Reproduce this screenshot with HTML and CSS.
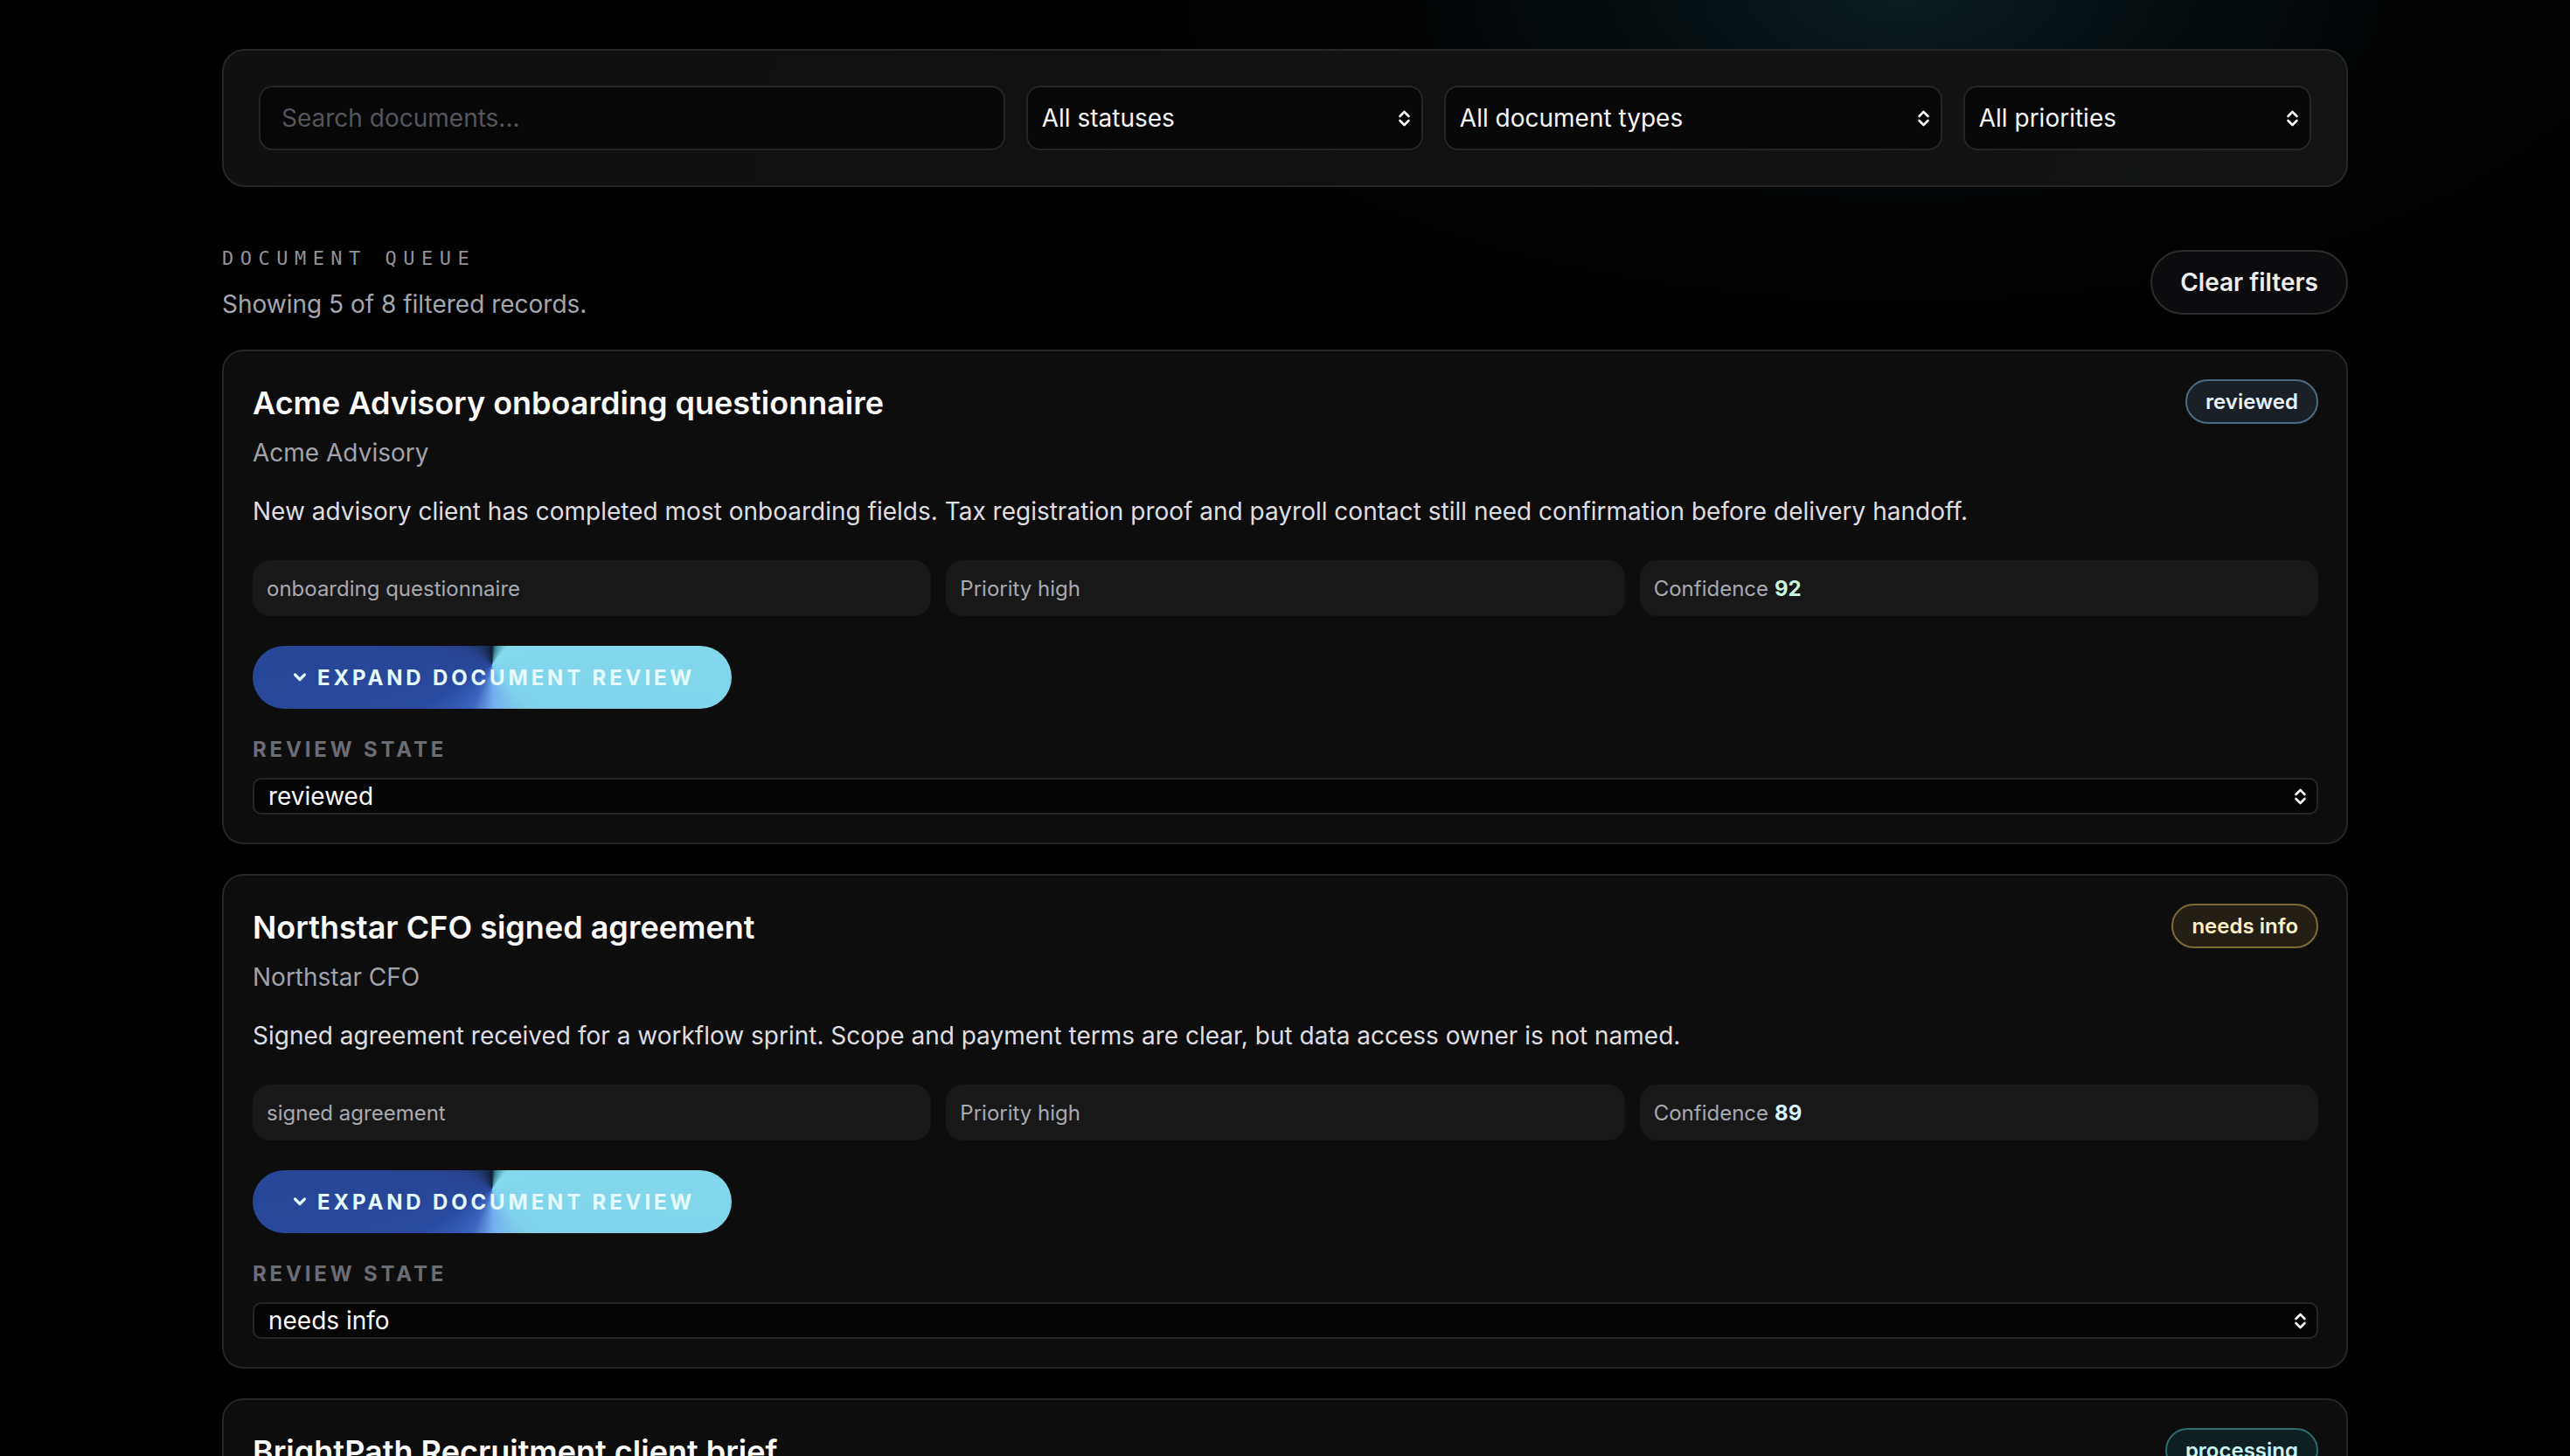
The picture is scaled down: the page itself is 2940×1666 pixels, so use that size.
FILE: index.html
```html
<!DOCTYPE html>
<html lang="en">
<head>
<meta charset="utf-8">
<title>Document queue</title>
<link rel="stylesheet" href="styles.css">
</head>
<body>
<main class="page">
  <section class="filters">
    <input class="search" type="text" placeholder="Search documents...">
    <div class="select-wrap">
      <select class="select"><option>All statuses</option></select>
      <svg class="updown" viewBox="0 0 15 21"><path d="M2.5 8 L7.5 3 L12.5 8 M2.5 13 L7.5 18 L12.5 13"/></svg>
    </div>
    <div class="select-wrap">
      <select class="select"><option>All document types</option></select>
      <svg class="updown" viewBox="0 0 15 21"><path d="M2.5 8 L7.5 3 L12.5 8 M2.5 13 L7.5 18 L12.5 13"/></svg>
    </div>
    <div class="select-wrap">
      <select class="select"><option>All priorities</option></select>
      <svg class="updown" viewBox="0 0 15 21"><path d="M2.5 8 L7.5 3 L12.5 8 M2.5 13 L7.5 18 L12.5 13"/></svg>
    </div>
  </section>

  <header class="queue-head">
    <div class="queue-titles">
      <div class="eyebrow">DOCUMENT QUEUE</div>
      <p class="count">Showing 5 of 8 filtered records.</p>
    </div>
    <button class="clear">Clear filters</button>
  </header>

  <div class="list">
    <article class="card">
      <div class="card-head">
        <div>
          <h2 class="title">Acme Advisory onboarding questionnaire</h2>
          <p class="client">Acme Advisory</p>
        </div>
        <span class="badge badge-reviewed">reviewed</span>
      </div>
      <p class="desc">New advisory client has completed most onboarding fields. Tax registration proof and payroll contact still need confirmation before delivery handoff.</p>
      <div class="chips">
        <span class="chip">onboarding questionnaire</span>
        <span class="chip">Priority high</span>
        <span class="chip">Confidence <b class="conf conf-high">92</b></span>
      </div>
      <button class="expand"><svg class="chev" viewBox="0 0 16 12"><path d="M2.5 3 L8 8.5 L13.5 3"/></svg>EXPAND DOCUMENT REVIEW</button>
      <div class="state-label">REVIEW STATE</div>
      <div class="select-wrap">
        <select class="state-select"><option>reviewed</option></select>
        <svg class="updown" viewBox="0 0 15 21"><path d="M2.5 8 L7.5 3 L12.5 8 M2.5 13 L7.5 18 L12.5 13"/></svg>
      </div>
    </article>

    <article class="card">
      <div class="card-head">
        <div>
          <h2 class="title">Northstar CFO signed agreement</h2>
          <p class="client">Northstar CFO</p>
        </div>
        <span class="badge badge-needs">needs info</span>
      </div>
      <p class="desc">Signed agreement received for a workflow sprint. Scope and payment terms are clear, but data access owner is not named.</p>
      <div class="chips">
        <span class="chip">signed agreement</span>
        <span class="chip">Priority high</span>
        <span class="chip">Confidence <b class="conf">89</b></span>
      </div>
      <button class="expand"><svg class="chev" viewBox="0 0 16 12"><path d="M2.5 3 L8 8.5 L13.5 3"/></svg>EXPAND DOCUMENT REVIEW</button>
      <div class="state-label">REVIEW STATE</div>
      <div class="select-wrap">
        <select class="state-select"><option>needs info</option></select>
        <svg class="updown" viewBox="0 0 15 21"><path d="M2.5 8 L7.5 3 L12.5 8 M2.5 13 L7.5 18 L12.5 13"/></svg>
      </div>
    </article>

    <article class="card">
      <div class="card-head">
        <div>
          <h2 class="title">BrightPath Recruitment client brief</h2>
          <p class="client">BrightPath Recruitment</p>
        </div>
        <span class="badge badge-processing">processing</span>
      </div>
      <p class="desc">Client brief received for recruitment workflow review. Extraction is still running on the attached role descriptions.</p>
      <div class="chips">
        <span class="chip">client brief</span>
        <span class="chip">Priority medium</span>
        <span class="chip">Confidence <b class="conf">74</b></span>
      </div>
      <button class="expand"><svg class="chev" viewBox="0 0 16 12"><path d="M2.5 3 L8 8.5 L13.5 3"/></svg>EXPAND DOCUMENT REVIEW</button>
      <div class="state-label">REVIEW STATE</div>
      <div class="select-wrap">
        <select class="state-select"><option>processing</option></select>
        <svg class="updown" viewBox="0 0 15 21"><path d="M2.5 8 L7.5 3 L12.5 8 M2.5 13 L7.5 18 L12.5 13"/></svg>
      </div>
    </article>
  </div>
</main>
</body>
</html>
```
FILE: styles.css
```css
* { box-sizing: border-box; }

html, body {
  margin: 0;
  background: #000;
}

body {
  min-height: 1666px;
  font-family: Inter, "Noto Sans", "Liberation Sans", sans-serif;
  color: #f2f2f2;
  background:
    radial-gradient(ellipse 1000px 420px at 74% 0%, rgba(28, 64, 72, 0.42), rgba(10, 24, 28, 0.15) 55%, transparent 100%),
    #000;
}

.page {
  width: 2432px;
  margin: 0 auto;
  padding-top: 56px;
}

/* Filters panel */
.filters {
  display: grid;
  grid-template-columns: 1.88fr 1fr 1.255fr 0.877fr;
  gap: 24px;
  padding: 40px;
  background: linear-gradient(100deg, #101010 0%, #111111 60%, #121314 100%);
  border: 2px solid #262626;
  border-radius: 26px;
}

.search {
  height: 74px;
  padding: 0 24px;
  font: 400 28px Inter, "Noto Sans", sans-serif;
  color: #eee;
  background: #070707;
  border: 2px solid #252525;
  border-radius: 16px;
  outline: none;
}
.search::placeholder { color: #55555c; }

.select-wrap {
  position: relative;
}

.select {
  width: 100%;
  height: 74px;
  padding: 0 40px 0 16px;
  font: 400 28px Inter, "Noto Sans", sans-serif;
  color: #f6f6f6;
  background: #070707;
  border: 2px solid #252525;
  border-radius: 16px;
  appearance: none;
  -webkit-appearance: none;
  outline: none;
}

.updown {
  position: absolute;
  right: 14px;
  top: 50%;
  width: 15px;
  height: 21px;
  margin-top: -10px;
  pointer-events: none;
  fill: none;
  stroke: #f4f4f4;
  stroke-width: 2.6;
  stroke-linecap: round;
  stroke-linejoin: round;
}

/* Queue header */
.queue-head {
  display: flex;
  justify-content: space-between;
  align-items: flex-start;
  margin: 69px 0 32px;
}

.queue-titles {
  margin-top: 2px;
}

.eyebrow {
  font: 400 22px "DejaVu Sans Mono", "Liberation Mono", monospace;
  line-height: 22px;
  letter-spacing: 0.34em;
  color: #92929a;
}

.count {
  margin: 21px 0 0;
  font-size: 28px;
  line-height: 40px;
  color: #a6a6ae;
}

.clear {
  height: 74px;
  margin-top: 3px;
  padding: 0 32px;
  font: 600 28px Inter, "Noto Sans", sans-serif;
  color: #ededed;
  background: #0c0c0e;
  border: 2px solid #2c2c2e;
  border-radius: 999px;
}

/* Cards */
.list {
  display: flex;
  flex-direction: column;
  gap: 34px;
}

.card {
  padding: 32px 32px 32px 33px;
  background: #0d0d0d;
  border: 2px solid #262626;
  border-radius: 24px;
}

.card-head {
  display: flex;
  justify-content: space-between;
  align-items: flex-start;
}

.title {
  margin: 2px 0 0;
  font-size: 36px;
  font-weight: 600;
  line-height: 50px;
  color: #fafafa;
}

.client {
  margin: 10px 0 0;
  font-size: 28px;
  line-height: 44px;
  color: #a2a2aa;
}

.badge {
  height: 51px;
  padding: 0 21px;
  font-size: 24px;
  font-weight: 600;
  line-height: 47px;
  border: 2px solid;
  border-radius: 999px;
}
.badge-reviewed { color: #e4f3ff; background: #1a2026; border-color: #4b6b80; }
.badge-needs { color: #fbf0c6; background: #241f15; border-color: #7c6a36; }
.badge-processing { color: #c8f4f2; background: #0f2022; border-color: #2d6b6c; }

.desc {
  margin: 23px 0 0;
  font-size: 28px;
  line-height: 44px;
  color: #dedee2;
}

.chips {
  display: grid;
  grid-template-columns: repeat(3, 1fr);
  gap: 17px;
  margin-top: 34px;
}

.chip {
  display: flex;
  align-items: center;
  height: 64px;
  padding: 0 16px;
  font-size: 24px;
  color: #a9a9b1;
  background: #181818;
  border-radius: 20px;
}

.conf {
  margin-left: 7px;
  font-weight: 700;
  color: #d6f5ff;
}
.conf-high { color: #c9f6df; }

.expand {
  display: flex;
  align-items: center;
  gap: 12px;
  height: 72px;
  margin-top: 34px;
  padding: 0 42px 0 46px;
  font: 700 24px Inter, "Noto Sans", sans-serif;
  letter-spacing: 0.16em;
  color: #e4faff;
  border: 0;
  border-radius: 999px;
  background: conic-gradient(from 0deg at 50% 30%,
    #15283a 0deg,
    #3f8a9c 12deg,
    #84dbec 40deg,
    #80d2ea 140deg,
    #74aef0 178deg,
    #3b66c0 205deg,
    #2a4aa2 240deg,
    #27438e 300deg,
    #1a2d58 340deg,
    #101c30 360deg);
}

.chev {
  width: 16px;
  height: 12px;
  fill: none;
  stroke: #e4faff;
  stroke-width: 3.2;
  stroke-linecap: round;
  stroke-linejoin: round;
}

.state-label {
  margin-top: 31px;
  font-size: 24px;
  font-weight: 700;
  line-height: 32px;
  letter-spacing: 0.16em;
  color: #6c6c74;
}

.card .select-wrap {
  margin-top: 16px;
}

.state-select {
  width: 100%;
  height: 42px;
  padding: 0 40px 0 16px;
  font: 400 28px Inter, "Noto Sans", sans-serif;
  color: #fbfbfb;
  background: #050505;
  border: 2px solid #262626;
  border-radius: 10px;
  appearance: none;
  -webkit-appearance: none;
  outline: none;
}

.card .updown { right: 13px; }
```
